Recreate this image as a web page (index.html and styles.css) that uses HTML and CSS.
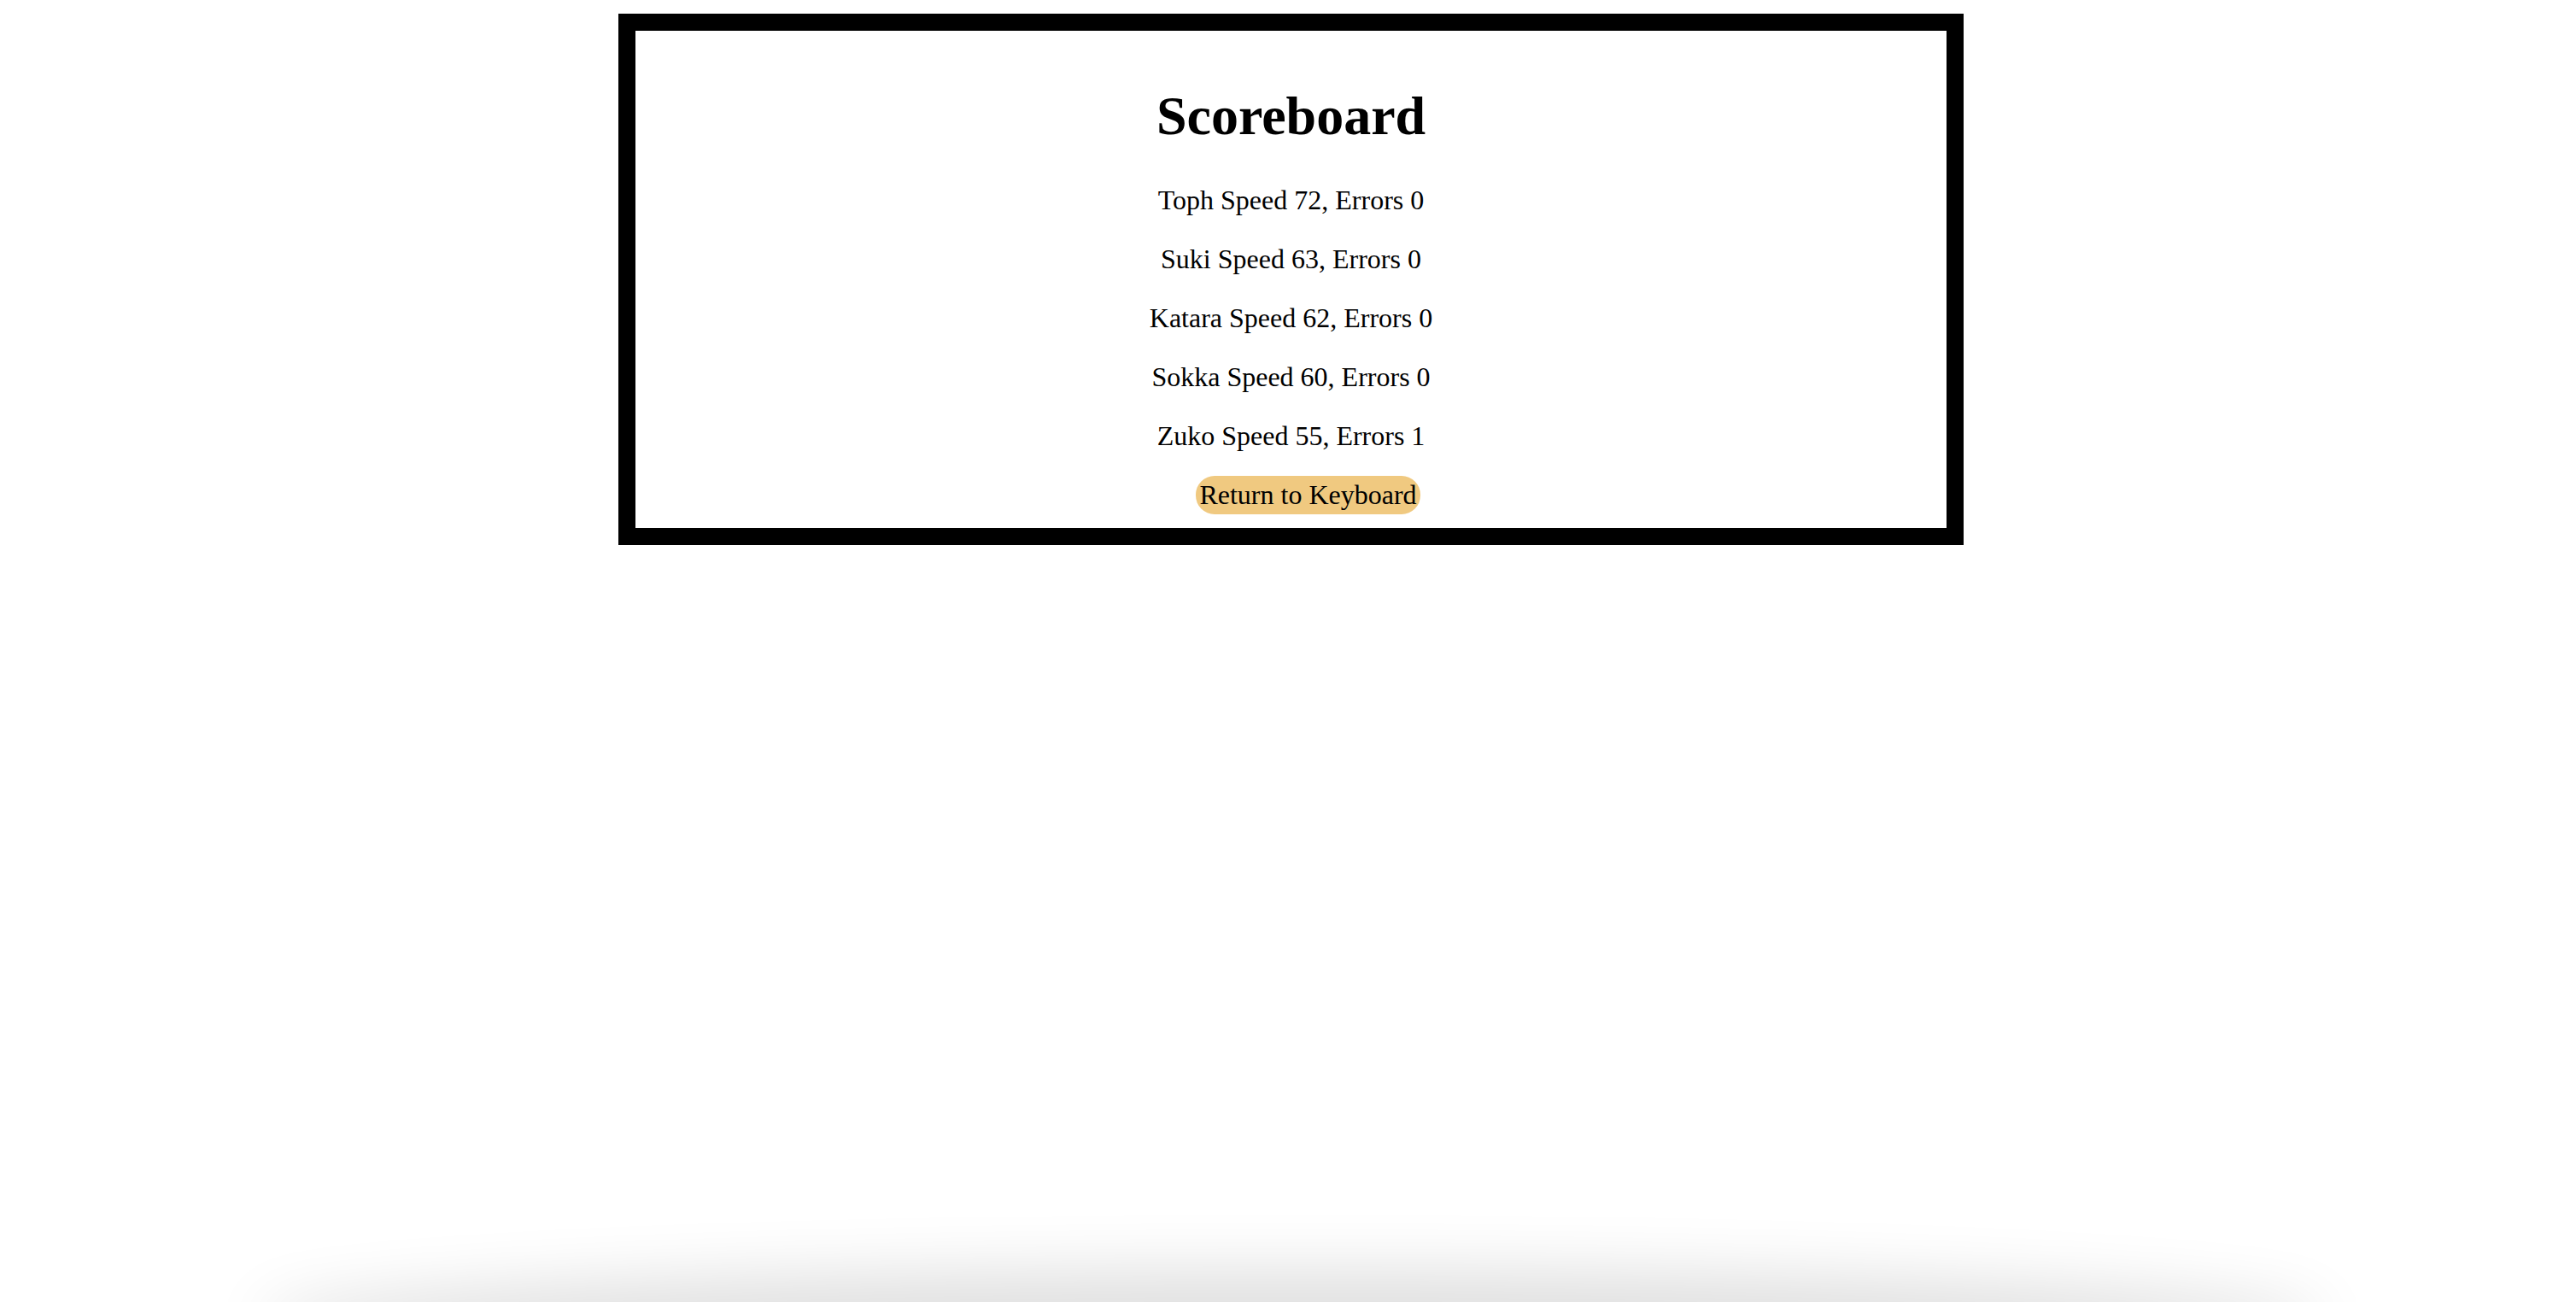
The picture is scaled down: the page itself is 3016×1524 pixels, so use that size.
FILE: index.html
```html
<!DOCTYPE html>
<html>
<head>
<meta charset="utf-8">
<link rel="stylesheet" href="styles.css">
</head>
<body>
<div class="board">
  <h1 class="title">Scoreboard</h1>
  <p class="row">Toph Speed 72, Errors 0</p>
  <p class="row">Suki Speed 63, Errors 0</p>
  <p class="row">Katara Speed 62, Errors 0</p>
  <p class="row">Sokka Speed 60, Errors 0</p>
  <p class="row">Zuko Speed 55, Errors 1</p>
  <div class="actions"><button class="return">Return to Keyboard</button></div>
</div>
<div class="dock-shadow"></div>
</body>
</html>
```
FILE: styles.css
```css
html, body {
  margin: 0;
  padding: 0;
  background: #ffffff;
  height: 100%;
  overflow: hidden;
}
body {
  font-family: "Liberation Serif", "Times New Roman", serif;
  color: #000;
  padding-top: 16px;
  box-sizing: border-box;
}
.board {
  box-sizing: border-box;
  width: 1575px;
  margin-left: 724px;
  border: 20px solid #000;
  padding: 21px 0 16px;
  text-align: center;
}
.title {
  font-size: 64px;
  font-weight: bold;
  margin: 43px 0 45px;
  line-height: 71px;
}
.row {
  font-size: 32px;
  line-height: 37px;
  margin: 32px 0;
}
.title + .row { margin-top: 0; }
.row:last-of-type { margin-bottom: 28px; }
.actions {
  display: flex;
  justify-content: center;
  padding-left: 40px;
}
.return {
  font-family: "Liberation Serif", "Times New Roman", serif;
  font-size: 32px;
  line-height: 37px;
  height: 45px;
  padding: 0 4px;
  border: none;
  border-radius: 22px;
  background: #f0c980;
  color: #000;
}
.dock-shadow {
  position: fixed;
  left: 330px;
  right: 320px;
  bottom: -60px;
  height: 60px;
  border-radius: 50%;
  box-shadow: 0 -10px 70px 30px rgba(0,0,0,0.12);
}
```
